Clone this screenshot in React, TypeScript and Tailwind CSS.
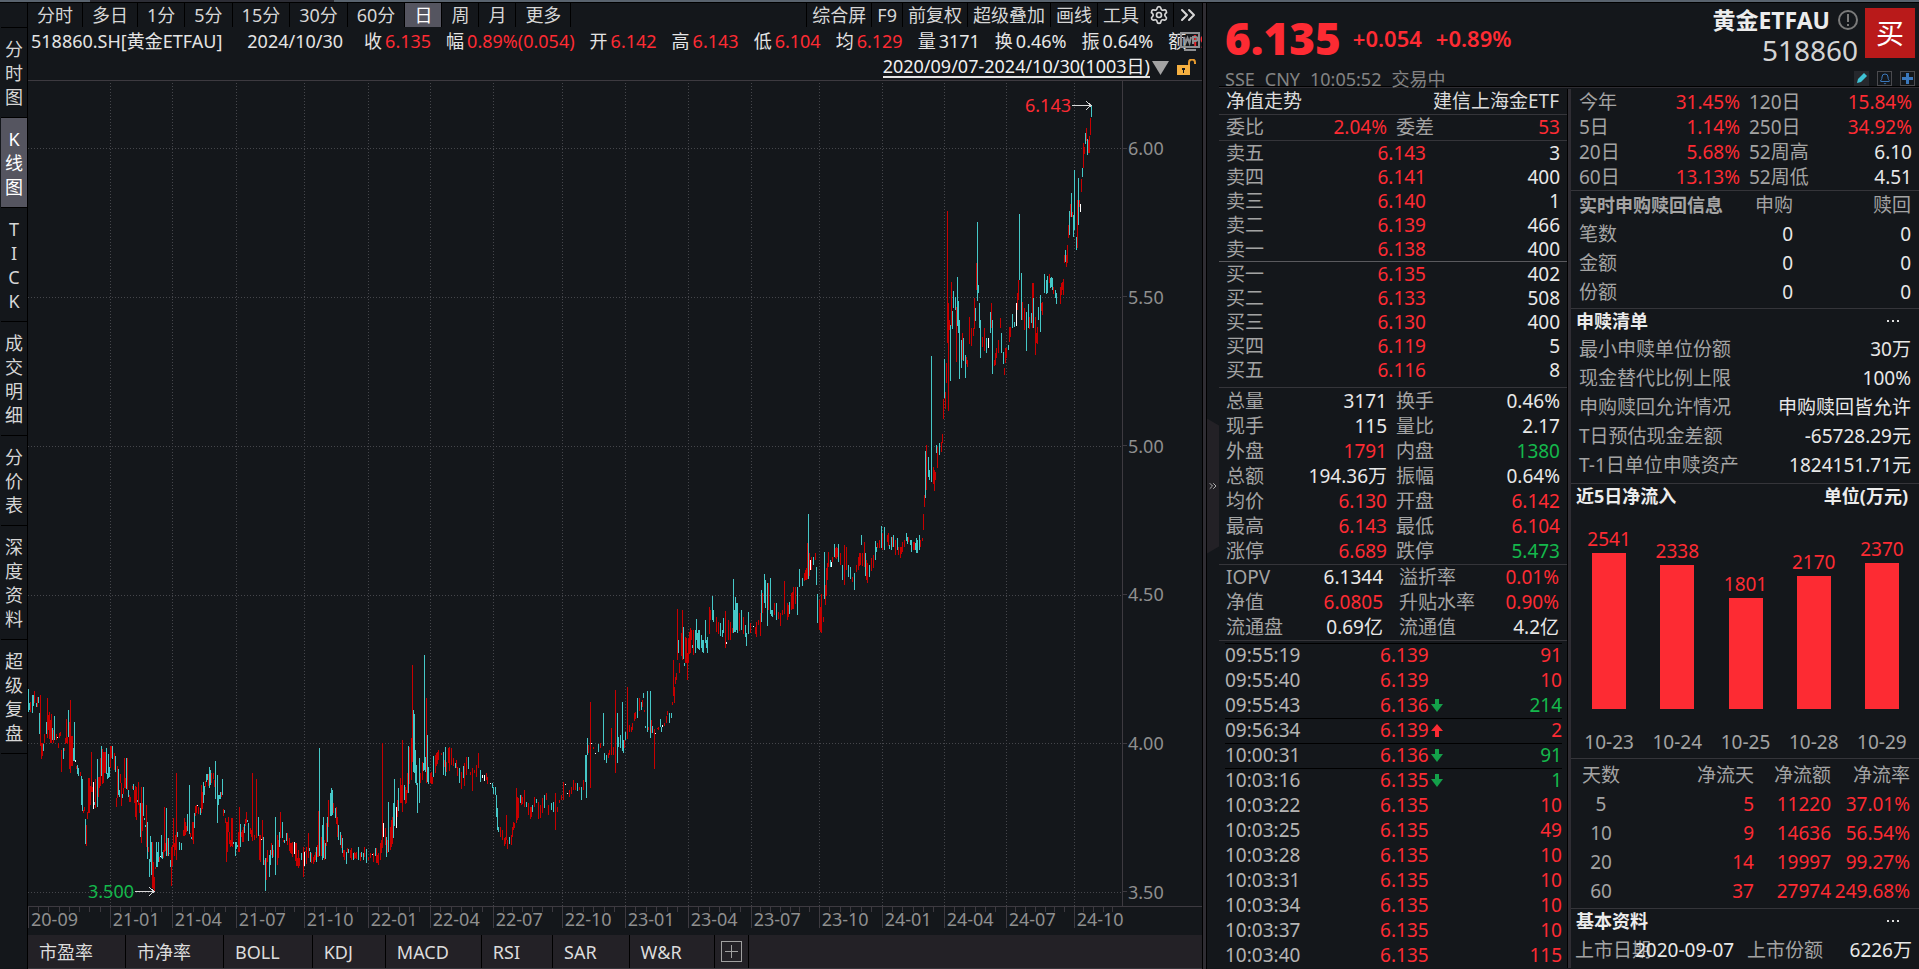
import clsx from 'clsx'
import { Bell, ChevronsRight, Settings } from 'lucide-react'
import type { ReactNode } from 'react'

type Tone = 'up' | 'down' | 'flat'

const toneClass: Record<Tone, string> = {
  up: 'text-[#fd2b33]',
  down: 'text-[#14b84c]',
  flat: 'text-[#e8e8e8]',
}

const periods = ['分时', '多日', '1分', '5分', '15分', '30分', '60分', '日', '周', '月', '更多']
const tools = ['综合屏', 'F9', '前复权', '超级叠加', '画线', '工具']
const sideTabs = ['分时图', 'K线图', 'TICK', '成交明细', '分价表', '深度资料', '超级复盘']
const indicators = ['市盈率', '市净率', 'BOLL', 'KDJ', 'MACD', 'RSI', 'SAR', 'W&R']

const summary: [string, string, Tone][] = [
  ['收', '6.135', 'up'],
  ['幅', '0.89%(0.054)', 'up'],
  ['开', '6.142', 'up'],
  ['高', '6.143', 'up'],
  ['低', '6.104', 'up'],
  ['均', '6.129', 'up'],
  ['量', '3171', 'flat'],
  ['换', '0.46%', 'flat'],
  ['振', '0.64%', 'flat'],
  ['额', '194.36万', 'up'],
]

const priceLabels = ['6.00', '5.50', '5.00', '4.50', '4.00', '3.50']
const priceLines = [148, 297, 446, 595, 743, 892]

// label, start x, number of monthly ticks
const months: [string, number, number][] = [
  ['20-09', 28, 8],
  ['21-01', 110, 6],
  ['21-04', 172, 6],
  ['21-07', 236, 7],
  ['21-10', 304, 6],
  ['22-01', 368, 6],
  ['22-04', 430, 6],
  ['22-07', 493, 7],
  ['22-10', 562, 6],
  ['23-01', 625, 6],
  ['23-04', 688, 6],
  ['23-07', 751, 7],
  ['23-10', 819, 6],
  ['24-01', 882, 6],
  ['24-04', 944, 6],
  ['24-07', 1006, 7],
  ['24-10', 1074, 5],
]
const plotEnd = 1122

// candles as <x><colour><top>-<bottom>, every block on its own grid
const blocks = [
  {
    x: 26,
    y: 680,
    step: 3,
    data: `7c27-95 10c70-90 13r65-95 19c45-98 22c45-78 25r33-70 31c70-83 34r52-83 37c52-70 40c98-162 43r45-198 46r190-237
    49r190-230 52c192-213 55r162-190 61c126-162 64r55-175 67r105-150 70r95-175 73r120-190 76r102-190 79c143-180 82r150-190
    85c108-180 90r163-180 94w170-174 97r188-204 100r160-175 103r155-168 106r210-276 112c204-237 115r204-213 119r175-192
    122r117-190 124r170-190 127c90-170 130r125-267 133r60-278 136r168-258 139r168-258 142c205-245 145c126-243 148w240-245
    151r258-267 154c255-282 157c265-288 163r276-288 166c288-375 169c297-392 172r390-398 175r380-392 178c417-492 181r435-497
    184r396-417 187r294-400 190r294-398 193r318-375 196r216-335 199r320-335 202w306-387 205c366-375 208r297-384 214c237-381
    217r290-350 220r290-322 223r235-318 226c198-288 229r208-312 232r216-310 235r216-280 238r216-280 241c205-282 244c280-297
    247c222-293 250c260-290 253r198-265 256r198-235 259c198-237 265r220-272 268c228-276 271r353-380 274r258-355 277c267-345
    280c330-350 283r282-310 286r310-378 289c342-354 292r324-342 295r234-325 298r295-325 301c234-327 304r234-330 307c330-352
    310r345-365 313r350-365 319r318-328 322c312-330 325r330-370 328r318-410 331r320-420 334c360-365 337r306-375 340r370-400
    343c370-473 346r320-488 349r370-455 352c320-408 355c415-420 358c435-440 361r375-500 364c427-537 367r500-515 370c537-590
    373c468-545 376c486-585 379r486-625 382r545-625 385r590-634 388r560-567 391c486-562 394c515-560 397c486-545 400r530-545
    403w527-530 406c465-533 409c515-535 412r510-533 415r380-515 418r490-515 421c384-527 424r475-530 427c473-527 430r520-524
    433c540-560 436r500-617 439r495-557 442r415-502 445r490-530 448r465-510 451r280-540 454c456-470 460c486-510 466c490-510
    472r450-468 475r415-468 478r425-465 481r438-455 484c402-452 490c315-462 493r460-472 496c470-475 499r425-478 502r425-490
    505c400-445 508r378-408 511r375-400 514w375-378 517r380-400 523c385-405 526r315-400 529r335-385 532c306-370 535c318-345
    538r303-320 541c283-306 544c283-300 547r283-320 550c262-325 553c270-315 556r280-310 562r278-295 565r300-320 568c243-357
    574c285-430 577c345-375 580c345-358 583c335-355 586r335-350 589c297-345 592r388-408 595c390-398 598r415-430 601r425-545
    604r425-515 607r410-455 610r455-490 613r480-500 616r415-500 619r415-503 622c485-490 628c485-527 631c485-505 634c495-500
    637r455-515 640r380-515 643c432-500 646r455-470 649r450-485 652r440-485 655c432-460 658r418-440 661r396-430 664c420-425
    667c430-485 673r443-460 676r450-470 679r280-485 685r465-480 691r298-475 697c410-467 700r465-540 703r465-545 706w477-480
    709r420-480 712c470-553 715r540-555 718c533-633 721r533-598 724r510-545 730c525-590 733c510-555 736r490-525 739c495-535
    742r510-530 748c410-585 754r465-555 757r480-535 760c455-500 763r396-475 769c427-475 772r480-485 775c480-490 781c460-485
    784r460-495 790r475-515 793r490-520 796r490-522 799r485-530 805w485-520 808r490-545 811r490-560 814r535-560 817r510-565
    820r535-560 826c520-540 832r500-590 835w515-557 838r513-516 841r500-550 847r460-535 850c505-515 853c515-545 856r520-550
    862r530-550 865r525-545 868r515-540 871c500-545 874r495-530 877r393-530 880c205-530 886r470-528 889c445-530 892c412-535
    895r500-530 898c500-535`,
  },
  {
    x: 0,
    y: 640,
    step: 3,
    data: `790c555-660 795r600-660 797c610-625 800r550-620 803c530-605 806r480-560 809c460-530 812c445-530 815c450-525
    818r490-520 821c505-535 824r500-550 827r530-590 830c555-600 833c575-615 836r585-625 839c595-640 842r630-650 845r630-660
    848c635-670 851r625-640 855c628-640 858r630-655 861r625-660 865c640-660 868r635-655 871r640-655 874r635-655 878c622-660
    882r640-665 886c635-650 890c640-660 893r620-650 898c628-670 902r650-660 907r640-655 912w643-646 915r640-668 919c625-650
    922r625-670 925r645-670 928r640-675 931r610-660 934r600-640 937r310-625 940w548-590 944r565-615 948c590-650 950r600-640
    953c485-635 957r560-630 959r540-620 961r530-610 964c490-595 967c418-560 971w500-562 974r480-530 977c445-515 981r415-490
    984r435-490 986r300-515 990c435-480 993r440-490 996r450-490 999r400-460 1001c318-460 1004r320-430 1007r295-420 1010r75-365
    1013c210-395 1015c222-400 1017c330-430 1020c375-435 1023c430-520 1027c355-490 1031r400-430 1034r365-420 1037c370-395
    1040c45-390 1043c350-395 1045r175-430 1048c285-425 1051c380-430 1054r400-430 1057r395-430 1059r410-430 1062c348-410
    1066r345-400 1069r340-380 1071r335-370 1075r330-360 1081r340-346 1087c335-405 1089r360-380 1091c322-410 1095r365-395
    1098r325-370 1101r322-395 1105r325-375 1110r355-380 1115c370-385 1119r360-385 1122r380-408 1126c385-430 1131r395-447
    1135c378-415 1139r370-440 1142r370-400 1144r350-405 1148c350-385 1153r395-405 1158r385-455 1163r390-400 1168r375-410
    1173r340-385 1178c390-425 1183w405-415 1188w405-422 1192r400-420 1195r410-430 1201w428-432 1207c430-445 1210c440-460
    1213c440-465 1216c465-530 1219c505-570 1222c560-575 1227r560-590 1230r570-595 1232r580-600 1236r595-620 1239r590-610
    1241r525-600 1244r600-628 1248c590-610 1252r585-615 1256r560-590 1258r545-570 1261r550-565 1265r445-550 1268r470-540
    1270r475-535 1275c465-490 1278r465-495 1280r470-490 1286r450-500 1290c485-500 1295r490-525 1300r500-535 1302r500-530
    1305c495-515 1310r470-500 1315c478-490 1320r485-535 1325r495-535 1328r490-520 1330r475-515 1335c465-505 1340r458-480
    1345r495-525 1350c490-510 1355c485-515 1360r458-570 1365r500-515 1370r480-490 1376r465-480 1380r425-480 1386w432-436
    1390w460-464 1395r450-470 1399r440-460 1405r420-450 1410r430-450 1416c430-455 1420r440-450 1424c440-478 1429r420-450
    1434c345-425 1437c345-475 1440c295-345 1443r315-340 1446r185-443 1450w310-314 1455r320-326 1460w340-343 1466c312-335
    1470r310-325 1478c220-320 1482c340-360 1485c345-368 1490r340-355 1494r330-345 1498r265-345 1503r320-345 1508r150-400
    1512c220-370 1516c290-320 1520c285-325 1525c187-335 1527c300-340 1530r300-325 1533c275-298 1537r142-298 1543r255-275
    1546r260-275 1550r250-270 1554r220-245 1557r215-235 1562c175-235 1566r175-215`,
  },
  {
    x: 640,
    y: 640,
    step: 3,
    data: `3c185-210 6r180-200 8c158-172 11r210-215 14c258-265 18c153-275 22r262-270 25c153-293 28r240-280 31c258-278
    35r268-387 38w280-284 42r264-268 46r260-270 50c238-262 52c260-276 54w256-262 60r250-258 65r228-250 68r212-225 72c218-248
    76c220-235 80r185-195 82r60-168 84r140-188 87r110-130 89r100-120 94c0-40 97r70-100 101r-20-50 103r-20-62 106c-40-55
    109c70-78 111r-10-68 113r10-70 116r40-120 118r0-70 120r-5-65 128c15-25 131r-15-45`,
  },
  {
    x: 640,
    y: 320,
    step: 3,
    data: `92r868-1020 104r870-1010 113r955-1020 118r960-1020 122r935-1000 124r925-1000 127r930-960 130r930-995 135c930-1000
    138c897-960 142c940-985 144c930-988 146c930-990 150c945-985 153c960-995 155c960-1000 160c900-970 163c960-985 165c950-997
    170r860-940 173r870-900 177c828-900 181c870-905 187r890-935 192r905-940 197c910-950 201c930-950 204c895-940 209r873-985
    213w965-972 217r900-960 221r905-960 226r925-940 229c778-940 232c870-935 235c830-935 237c850-930 239c850-940 244r880-935
    249c870-930 254r890-940 259c915-950 261c940-978 265c875-940 270r910-940 277w918-921 282r920-940 286r905-950 291r900-915
    295r880-950 298c810-905 301r820-880 304c763-850 308c780-865 312c790-918 315r790-870 319c773-880 322c870-888 325c870-890
    330r850-885 335c850-900 340r875-895 345r880-920 350r870-885 353r860-880 355r783-870 362r850-900 364r855-890 367c845-880
    371r820-870 374r815-865 376r800-865 381r800-850 386c800-885 391c747-800 397c775-800 402r760-785 405r750-780 407r745-780
    411r668-775 413c583-778 416r700-770 418w720-750 421r710-750 425c710-735 430r700-720 433c740-795 436c822-908 440r840-930
    442r860-935 444r822-940 449r890-905 452c695-835 455r795-855 458r745-830 460r730-780 463r695-740 466c720-740 468w725-740
    472r710-725 476c672-710 479r685-715 481r680-715 483r685-712 486c672-725 490r700-735 495c735-780 500c760-790 502r675-795
    507r680-750 512c735-770 516c740-775 520r770-785 525c760-812 531r735-755 535r710-750 538r700-740 540r700-735 542c645-675
    546r700-740 549r665-740 553c700-770 555r720-780 557r730-790 562c735-770 566r715-755 571r705-745 577c663-720 580c680-695
    583r670-685 587r660-685 591c618-685 593r650-685 595r640-690 598c620-680 600c620-690 606r645-665 609r640-680 611c675-688
    615c650-690 618r650-680 621c645-680 626r660-705 631c655-690 634r680-705 637r680-712 640r680-700 643r665-695 648r660-680
    653c640-665 656c650-670 658r650-665 662c660-675 666c660-695 670r665-690 672r665-690 675c670-690 678c655-700 681c660-698
    684c645-690 686r660-680 692r655-663 695r582-630 698r525-560 700c393-535 703r375-510 706c410-450 708c420-470 710c450-480
    714c108-485 718r440-490 722r450-513 724r455-480 727c375-400 729r380-443 734c370-405 739r365-395 741r343-370 744r237-297
    746c117-235 749r215-265 752r130-190`,
  },
  {
    x: 640,
    y: 0,
    step: 3,
    data: `753r633-1030 754r900-1030 756r910-1235 758r960-990 760c975-1143 763r847-980 766c932-985 769c873-925 772c890-930
    775r920-1085 778c832-980 781c903-1000 783c960-1137 787c1020-1105 790r1000-1080 793c1015-1085 797c1065-1133 800r1070-1090
    803r1080-1100 807r950-1030 811r985-1040 817r985-1010 820r893-985 822c925-965 824r790-870 827c667-905 830c855-880
    832c910-985 834c960-1075 838r1010-1040 843r985-1045 845r1015-1055 848c1015-1060 853w1015-1045 858c937-1000 861r910-985
    864c960-1122 868r1080-1097 870r1060-1097 873r1045-1075 878r1020-1060 882r955-985 886c1000-1060 890c1055-1090
    893r1105-1125 896r1045-1090 898r1045-1075 903c1035-1050 906r980-1025 908r980-1010 912c943-985 917c965-980 922w910-978
    926r880-930 928r840-900 930c643-840 934c820-960 938r905-960 943r925-990 946r940-1000 948c935-1053 953c912-985
    955r950-985 958c940-970 961r850-985 963r850-900 965c895-985 969r950-1065 971r1000-1030 973r980-1030 977c920-960
    981c885-995 984r910-935 986r905-945 991c822-880 995c845-870 997c840-882 999c828-880 1003r823-850 1005c835-865
    1007c832-862 1009c830-860 1011c835-870 1014r860-880 1018c870-895 1021c880-912 1029r860-912 1033r850-885 1035r845-870
    1037r838-885 1041r765-790 1043c750-785 1046r765-800 1048r735-790 1051r675-713 1053c633-705 1055r612-650 1057c580-653
    1060r635-650 1062c645-710 1065c510-690 1069c710-750 1071r610-745 1073r600-700 1075c535-675 1077r600-620 1079w612-635
    1081r537-575 1084c505-533 1087r430-505 1089r440-460 1091c400-432 1094r385-425 1096c418-467 1099r420-458 1101r408-458
    1104r353-405 1106c315-350`,
  },
]

const candleColor: Record<string, string> = { r: '#c80000', c: '#45c8c8', w: '#ffffff' }

const candles = blocks.flatMap((block, index) =>
  block.data.split(/\s+/).map((item) => {
    const [, x, color, top, bottom] = item.match(/^(\d+)([rcw])(-?\d+)-(-?\d+)$/) ?? []
    const xScale = index === 0 ? 3 : 2.45
    const y1 = block.y + Number(top) / block.step
    const y2 = block.y + Number(bottom) / block.step
    return {
      x: Math.round(block.x + Number(x) / xScale - 0.5),
      y: Math.round(y1),
      height: Math.max(1, Math.round(y2 - y1)),
      fill: candleColor[color],
    }
  }),
)

const asks = [
  ['卖五', '6.143', '3'],
  ['卖四', '6.141', '400'],
  ['卖三', '6.140', '1'],
  ['卖二', '6.139', '466'],
  ['卖一', '6.138', '400'],
]
const bids = [
  ['买一', '6.135', '402'],
  ['买二', '6.133', '508'],
  ['买三', '6.130', '400'],
  ['买四', '6.119', '5'],
  ['买五', '6.116', '8'],
]

type Pair = [string, string, Tone, string, string, Tone]

const stats: Pair[] = [
  ['总量', '3171', 'flat', '换手', '0.46%', 'flat'],
  ['现手', '115', 'flat', '量比', '2.17', 'flat'],
  ['外盘', '1791', 'up', '内盘', '1380', 'down'],
  ['总额', '194.36万', 'flat', '振幅', '0.64%', 'flat'],
  ['均价', '6.130', 'up', '开盘', '6.142', 'up'],
  ['最高', '6.143', 'up', '最低', '6.104', 'up'],
  ['涨停', '6.689', 'up', '跌停', '5.473', 'down'],
]
const fundStats: Pair[] = [
  ['IOPV', '6.1344', 'flat', '溢折率', '0.01%', 'up'],
  ['净值', '6.0805', 'up', '升贴水率', '0.90%', 'up'],
  ['流通盘', '0.69亿', 'flat', '流通值', '4.2亿', 'flat'],
]
const returns: Pair[] = [
  ['今年', '31.45%', 'up', '120日', '15.84%', 'up'],
  ['5日', '1.14%', 'up', '250日', '34.92%', 'up'],
  ['20日', '5.68%', 'up', '52周高', '6.10', 'flat'],
  ['60日', '13.13%', 'up', '52周低', '4.51', 'flat'],
]

// time, price, arrow, volume, volume tone, separator above
const trades: [string, string, '' | 'up' | 'down', string, Tone, boolean][] = [
  ['09:55:19', '6.139', '', '91', 'up', true],
  ['09:55:40', '6.139', '', '10', 'up', false],
  ['09:55:43', '6.136', 'down', '214', 'down', false],
  ['09:56:34', '6.139', 'up', '2', 'up', true],
  ['10:00:31', '6.136', 'down', '91', 'down', true],
  ['10:03:16', '6.135', 'down', '1', 'down', true],
  ['10:03:22', '6.135', '', '10', 'up', false],
  ['10:03:25', '6.135', '', '49', 'up', false],
  ['10:03:28', '6.135', '', '10', 'up', false],
  ['10:03:31', '6.135', '', '10', 'up', false],
  ['10:03:34', '6.135', '', '10', 'up', false],
  ['10:03:37', '6.135', '', '10', 'up', false],
  ['10:03:40', '6.135', '', '115', 'up', false],
]

const redemption = [
  ['最小申赎单位份额', '30万'],
  ['现金替代比例上限', '100%'],
  ['申购赎回允许情况', '申购赎回皆允许'],
  ['T日预估现金差额', '-65728.29元'],
  ['T-1日单位申赎资产', '1824151.71元'],
]
const inflows: [string, number][] = [
  ['10-23', 2541],
  ['10-24', 2338],
  ['10-25', 1801],
  ['10-28', 2170],
  ['10-29', 2370],
]
const flowTable = [
  ['5', '5', '11220', '37.01%'],
  ['10', '9', '14636', '56.54%'],
  ['20', '14', '19997', '99.27%'],
  ['60', '37', '27974', '249.68%'],
]

function Toolbar() {
  return (
    <nav className="flex h-6 justify-between">
      <div className="flex">
        {periods.map((item) => (
          <button
            key={item}
            type="button"
            className={clsx(
              'border-r border-black px-[9px] whitespace-nowrap',
              item === '日' ? 'bg-[#555560] text-white' : 'text-[#d6d6d6]',
            )}
          >
            {item}
          </button>
        ))}
      </div>
      <div className="flex border-l border-black text-[#d6d6d6]">
        {tools.map((item) => (
          <button key={item} type="button" className="border-r border-black px-[5px] whitespace-nowrap">
            {item}
          </button>
        ))}
        <button type="button" aria-label="设置" className="border-r border-black px-1">
          <Settings className="size-5" strokeWidth={2} />
        </button>
        <button type="button" aria-label="展开" className="px-[2px]">
          <ChevronsRight className="size-6" strokeWidth={2} />
        </button>
      </div>
    </nav>
  )
}

function Plot() {
  return (
    <svg
      className="block h-full w-full"
      viewBox="28 81 1094 825"
      preserveAspectRatio="none"
      shapeRendering="crispEdges"
      role="img"
      aria-label="日K线"
    >
      <g stroke="#45464b" strokeDasharray="1 2">
        {priceLines.map((y) => (
          <line key={y} x1="28" x2="1122" y1={y + 0.5} y2={y + 0.5} />
        ))}
        {months.slice(1).map(([label, x]) => (
          <line key={label} x1={x + 0.5} x2={x + 0.5} y1="83" y2="906" />
        ))}
      </g>
      {candles.map((candle, index) => (
        <rect key={index} x={candle.x} y={candle.y} width="1" height={candle.height} fill={candle.fill} />
      ))}
      <g fill="none" stroke="#d8d8d8">
        <path d="M1072 105.5h19M1086 101l5 4.500-5 4.500" />
        <path d="M135 891.500h19M149 887l5 4.500-5 4.500" />
      </g>
      <text x="1071" y="112" textAnchor="end" fontSize="18" fill="#fd2b33">
        6.143
      </text>
      <text x="134" y="898" textAnchor="end" fontSize="18" fill="#14b84c">
        3.500
      </text>
    </svg>
  )
}

function DateAxis() {
  return (
    <div className="flex h-[29px] border-t border-[#3d3a40] pr-[80px] text-[#8f8f8f]">
      {months.map(([label, x, ticks], index) => (
        <div
          key={label}
          className="relative h-[21px] min-w-0 basis-0 border-l border-[#3d3a40]"
          style={{ flexGrow: (months[index + 1]?.[1] ?? plotEnd) - x }}
        >
          <div className="absolute inset-x-0 top-0 flex h-[5px]">
            {Array.from({ length: ticks }, (_, i) => (
              <span key={i} className={clsx('flex-1', i > 0 && 'border-l border-[#3d3a40]')} />
            ))}
          </div>
          <span className="block pt-[2px] pl-[2px] leading-5 whitespace-nowrap">{label}</span>
        </div>
      ))}
    </div>
  )
}

function ChartPanel() {
  return (
    <section className="flex min-w-0 flex-1 flex-col">
      <Toolbar />
      <div className="relative flex h-[27px] items-center gap-[15px] overflow-hidden pt-px pl-[3px] whitespace-nowrap text-[#e4e4e4]">
        <h1 className="pr-[10px]">518860.SH[黄金ETFAU]</h1>
        <span className="pr-[6px]">2024/10/30</span>
        {summary.map(([label, value, tone]) => (
          <span key={label} className="flex gap-[3px]">
            {label}
            <span className={toneClass[tone]}>{value}</span>
          </span>
        ))}
        <svg className="absolute top-1 right-[2px] h-5 w-5" viewBox="0 0 20 20" fill="none" stroke="#8d8f92" strokeWidth="2">
          <path d="M1 2h18v14H1zM4 19h12M4 6l1.500 6 2-5 2 5L11 6M13 13V6h2.500a2 2 0 010 4H13" />
        </svg>
      </div>
      <div className="flex h-[26px] items-center justify-end pt-px pr-[5px]">
        <button type="button" className="border-b-2 border-[#e4e4e4] leading-[19px] text-[#f0f0f0]">
          2020/09/07-2024/10/30(1003日)
        </button>
        <svg className="ml-[2px] h-[14px] w-[17px]" viewBox="0 0 17 14" aria-hidden="true">
          <path d="M0 0h17L8.500 14z" fill="#a3a3a3" />
        </svg>
        <svg className="ml-2 h-[17px] w-5" viewBox="0 0 20 17" aria-hidden="true">
          <path d="M0 6h13v10H0z" fill="#f5b041" />
          <path d="M12 6V3.500a3 3 0 016 0V5" fill="none" stroke="#e59a2e" strokeWidth="2" />
          <path d="M5 9h3v2H7v3H6v-3H5z" fill="#14171b" />
        </svg>
      </div>
      <div className="flex min-h-0 flex-1 border-t border-[#3d3a40]">
        <div className="relative min-w-0 flex-1">
          <div className="absolute inset-0">
            <Plot />
          </div>
        </div>
        <ol className="flex w-[80px] flex-col justify-between border-l border-[#3d3a40] pt-[57px] pb-1 text-[#8f8f8f]">
          {priceLabels.map((label) => (
            <li key={label} className="flex h-5 items-center">
              <span className="mr-px h-px w-1 bg-[#3d3a40]" />
              {label}
            </li>
          ))}
        </ol>
      </div>
      <DateAxis />
      <div className="flex h-[34px] border-b border-[#35353a] bg-[#232126] text-[#dcdcdc]">
        {indicators.map((item) => (
          <button key={item} type="button" className="border-r border-black pr-8 pl-[11px] whitespace-nowrap">
            {item}
          </button>
        ))}
        <button type="button" aria-label="添加指标" className="border-r border-black px-[6px]">
          <svg className="h-[21px] w-[21px]" viewBox="0 0 21 21" fill="none" stroke="#a0a0a0" shapeRendering="crispEdges">
            <path d="M.5.5h20v20H.5zM4 10.500h13M10.500 4v13" />
          </svg>
        </button>
      </div>
    </section>
  )
}

function SideTabs() {
  return (
    <nav className="flex w-7 shrink-0 flex-col border-r border-black pt-6 pl-px">
      {sideTabs.map((item, index) => (
        <button
          key={item}
          type="button"
          className={clsx(
            'border-b border-black pt-[9px] pb-2 leading-6',
            index === 0 && 'border-t',
            item === 'K线图' ? 'bg-[#555560] text-white' : 'text-[#d6d6d6]',
          )}
        >
          {item.split('').map((char, i) => (
            <span key={i} className="block">
              {char}
            </span>
          ))}
        </button>
      ))}
    </nav>
  )
}

function QuoteHeader() {
  return (
    <header className="flex h-[84px] justify-between border-b border-black pr-1">
      <div className="flex flex-col justify-between pl-[6px] font-bold text-[#fd2b33]">
        <div className="flex items-center pt-3">
          <strong className="text-[44px] leading-[46px]">6.135</strong>
          <span className="ml-3 text-[22px] font-semibold">+0.054</span>
          <span className="ml-[14px] text-[22px] font-semibold">+0.89%</span>
        </div>
        <p className="flex gap-[10px] leading-[13px] font-normal text-[#838383]">
          <span>SSE</span>
          <span>CNY</span>
          <span>10:05:52</span>
          <span>交易中</span>
        </p>
      </div>
      <div className="flex flex-col items-end justify-between pt-[5px]">
        <div className="flex gap-[7px]">
          <div className="text-right text-[#ececec]">
            <h2 className="flex h-6 items-center justify-end gap-2 text-[23px] font-bold whitespace-nowrap">
              黄金ETFAU
              <svg className="h-5 w-5" viewBox="0 0 20 20" fill="none" stroke="#7a7a7a" strokeWidth="2">
                <circle cx="10" cy="10" r="9" />
                <path d="M10 4v8M10 14v2" />
              </svg>
            </h2>
            <p className="text-[28px] leading-9 text-[#d4d4d4]">518860</p>
          </div>
          <button type="button" className="h-[50px] w-[50px] bg-[#b91a1a] text-[28px] text-white">
            买
          </button>
        </div>
        <div className="flex gap-2">
          <button type="button" aria-label="编辑" className="h-[15px] w-[15px] bg-[#26282d]">
            <svg viewBox="0 0 15 15">
              <path d="M3 12l1-4 6-6 3 3-6 6z" fill="#3fc3d6" />
            </svg>
          </button>
          <button type="button" aria-label="提醒" className="flex h-[15px] w-[15px] items-center justify-center border border-[#4a4a4e] text-[#3a78bd]">
            <Bell className="size-3" />
          </button>
          <button type="button" aria-label="添加自选" className="h-[15px] w-[15px] border border-[#4a4a4e]">
            <svg viewBox="0 0 13 13">
              <path d="M5 1h3v4h4v3H8v4H5V8H1V5h4z" fill="#3a78bd" />
            </svg>
          </button>
        </div>
      </div>
    </header>
  )
}

function BookRows({ rows }: { rows: string[][] }) {
  return (
    <table className="w-full table-fixed leading-6">
      <tbody>
        {rows.map(([label, price, volume]) => (
          <tr key={label} className="h-6">
            <th scope="row" className="p-0 pl-[7px] text-left font-normal text-[#a3a3a3]">
              {label}
            </th>
            <td className="p-0 pr-[25px] text-right text-[#fd2b33]">{price}</td>
            <td className="p-0 pr-[7px] text-right text-[#e8e8e8]">{volume}</td>
          </tr>
        ))}
      </tbody>
    </table>
  )
}

function PairGrid({ rows, wide = false }: { rows: Pair[]; wide?: boolean }) {
  return (
    <dl
      className={clsx(
        'grid leading-[25px] whitespace-nowrap',
        wide ? 'grid-cols-[41px_100px_auto_1fr] gap-x-4' : 'grid-cols-[38px_114px_auto_1fr] gap-x-[9px]',
      )}
    >
      {rows.map(([a, aValue, aTone, b, bValue, bTone]) => (
        <div key={a} className="contents">
          <dt className="text-[#a3a3a3]">{a}</dt>
          <dd className={clsx('text-right', toneClass[aTone])}>{aValue}</dd>
          <dt className="text-[#a3a3a3]">{b}</dt>
          <dd className={clsx('text-right', toneClass[bTone])}>{bValue}</dd>
        </div>
      ))}
    </dl>
  )
}

function Trades() {
  return (
    <table className="ml-[6px] w-[337px] table-fixed leading-[25px]">
      <tbody>
        {trades.map(([time, price, arrow, volume, tone, separated]) => (
          <tr key={time} className={clsx('h-[25px]', separated && 'shadow-[inset_0_1px_0_#000]')}>
            <td className="p-0 text-left text-[#b4b4b4]">{time}</td>
            <td className="p-0 text-[#fd2b33]">
              <span className="flex items-center justify-end pr-[7px]">
                {price}
                <svg className="ml-[2px] h-[13px] w-3" viewBox="0 0 12 13" aria-hidden="true">
                  {arrow === 'down' && <path d="M4 0h4v5h4l-6 8-6-8h4z" fill="#14a04a" />}
                  {arrow === 'up' && <path d="M4 13h4V7h4L6 0 0 7h4z" fill="#fd2b33" />}
                </svg>
              </span>
            </td>
            <td className={clsx('p-0 text-right', toneClass[tone])}>{volume}</td>
          </tr>
        ))}
      </tbody>
    </table>
  )
}

function SectionTitle({ children, aside }: { children: ReactNode; aside: ReactNode }) {
  return (
    <div className="flex justify-between pr-[11px] pl-[5px] text-[18px] leading-6 font-bold text-[#ececec]">
      <h3>{children}</h3>
      {aside}
    </div>
  )
}

function MoreButton() {
  return (
    <button type="button" aria-label="更多" className="flex items-center gap-[3px] pr-[9px]">
      <span className="size-[2px] bg-[#dcdcdc]" />
      <span className="size-[2px] bg-[#dcdcdc]" />
      <span className="size-[2px] bg-[#dcdcdc]" />
    </button>
  )
}

function FundColumn() {
  return (
    <div className="min-w-0 flex-1 [&>section]:border-b [&>section]:border-[#35353a]">
      <section>
        <div className="pt-px pr-[7px] pl-2">
          <PairGrid rows={returns} />
        </div>
      </section>
      <section className="pb-px">
        <table className="w-full table-fixed leading-[29px] whitespace-nowrap text-[#a3a3a3]">
          <thead>
            <tr>
              <th className="w-[158px] p-0 pl-2 text-left text-[18px]">实时申购赎回信息</th>
              <th className="w-16 p-0 text-right font-normal">申购</th>
              <th className="p-0 pr-2 text-right font-normal">赎回</th>
            </tr>
          </thead>
          <tbody>
            {['笔数', '金额', '份额'].map((label) => (
              <tr key={label}>
                <th scope="row" className="p-0 pl-2 text-left font-normal">
                  {label}
                </th>
                <td className="p-0 text-right text-[#e8e8e8]">0</td>
                <td className="p-0 pr-2 text-right text-[#e8e8e8]">0</td>
              </tr>
            ))}
          </tbody>
        </table>
      </section>
      <section className="pb-[3px]">
        <SectionTitle aside={<MoreButton />}>申赎清单</SectionTitle>
        <dl className="px-2 pt-[2px] leading-[29px] whitespace-nowrap">
          {redemption.map(([label, value]) => (
            <div key={label} className="flex justify-between">
              <dt className="text-[#a3a3a3]">{label}</dt>
              <dd className="text-[#e8e8e8]">{value}</dd>
            </div>
          ))}
        </dl>
      </section>
      <section className="pb-[3px]">
        <SectionTitle aside={<span>单位(万元)</span>}>近5日净流入</SectionTitle>
        <ul className="flex h-[247px] items-end pr-[3px] pl-1 text-center">
          {inflows.map(([date, value]) => (
            <li key={date} className="flex-1">
              <div className="mb-[2px] leading-6 text-[#fd2b33]">{value}</div>
              <div className="mx-auto w-[34px] bg-[#fd2b33]" style={{ height: Math.round(value * 0.0614) }} />
              <div className="pt-[21px] leading-[25px] text-[#a3a3a3]">{date}</div>
            </li>
          ))}
        </ul>
      </section>
      <section className="pt-[2px] pb-[2px]">
        <table className="w-[339px] table-fixed text-right leading-[29px] text-[#fd2b33]">
          <thead className="text-[#a3a3a3]">
            <tr>
              <th className="w-[60px] p-0 text-center font-normal">天数</th>
              <th className="p-0 font-normal">净流天</th>
              <th className="w-[77px] p-0 font-normal">净流额</th>
              <th className="w-[79px] p-0 font-normal">净流率</th>
            </tr>
          </thead>
          <tbody>
            {flowTable.map(([days, netDays, amount, rate]) => (
              <tr key={days}>
                <th scope="row" className="p-0 text-center font-normal text-[#a3a3a3]">
                  {days}
                </th>
                <td className="p-0">{netDays}</td>
                <td className="p-0">{amount}</td>
                <td className="p-0">{rate}</td>
              </tr>
            ))}
          </tbody>
        </table>
      </section>
      <SectionTitle aside={<MoreButton />}>基本资料</SectionTitle>
      <dl className="flex justify-between pr-[7px] pl-1 leading-[34px] whitespace-nowrap">
        <div className="flex">
          <dt className="w-[60px] text-[#a3a3a3]">上市日期</dt>
          <dd className="text-[#e8e8e8]">2020-09-07</dd>
        </div>
        <div className="flex w-[165px] justify-between">
          <dt className="text-[#a3a3a3]">上市份额</dt>
          <dd className="text-[#e8e8e8]">6226万</dd>
        </div>
      </dl>
    </div>
  )
}

function QuotePanel() {
  return (
    <aside className="flex w-[717px] shrink-0">
      <div className="w-[5px] border-x border-black bg-[#2f2d33]" />
      <div className="flex w-3 flex-col justify-center">
        <button
          type="button"
          aria-label="收起"
          className="flex h-[135px] items-center justify-center bg-[#232126] text-[#b0b0b0] [clip-path:polygon(0_0,100%_7px,100%_128px,0_100%)]"
        >
          <ChevronsRight className="size-3" />
        </button>
      </div>
      <div className="min-w-0 flex-1">
        <QuoteHeader />
        <div className="flex border-t border-[#2f2d33] pt-px text-[19px]">
          <div className="w-[349px] border-r border-black">
            <div className="flex h-[26px] items-center justify-between border-b border-[#35353a] pr-2 pl-[7px] text-[#dcdcdc]">
              <a href="#nav">净值走势</a>
              <span>建信上海金ETF</span>
            </div>
            <div className="border-b border-[#35353a] px-[7px]">
              <PairGrid rows={[['委比', '2.04%', 'up', '委差', '53', 'up']]} />
            </div>
            <div className="border-b border-[#5a5a5e]">
              <BookRows rows={asks} />
            </div>
            <div className="border-b border-[#35353a] pb-[5px]">
              <BookRows rows={bids} />
            </div>
            <div className="border-b border-[#35353a] px-[7px] pt-px">
              <PairGrid rows={stats} />
            </div>
            <div className="border-b border-[#35353a] pr-2 pl-[7px]">
              <PairGrid rows={fundStats} wide />
            </div>
            <div className="pt-[2px]">
              <Trades />
            </div>
          </div>
          <div className="w-[3px] bg-[#2f2d33]" />
          <FundColumn />
        </div>
      </div>
    </aside>
  )
}

export default function App() {
  return (
    <div className="flex min-h-screen flex-col bg-[#14171b] font-['Noto_Sans','Noto_Sans_CJK_SC',sans-serif] text-[18px] leading-none text-[#d6d6d6]">
      <div className="flex h-[3px] border-b border-black bg-[#59636e]">
        <div className="ml-[90px] w-[244px] bg-[#2c2d35]" />
      </div>
      <main className="flex flex-1">
        <SideTabs />
        <ChartPanel />
        <QuotePanel />
      </main>
    </div>
  )
}
